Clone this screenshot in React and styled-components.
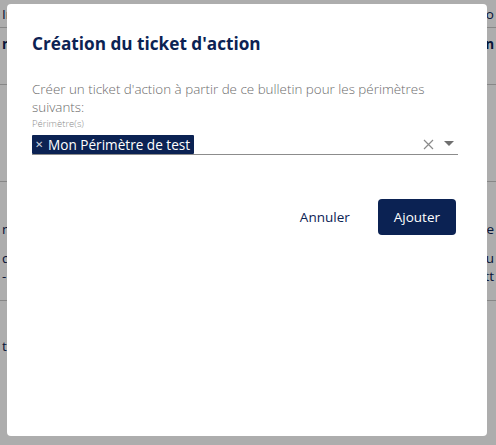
import React from "react";
import styled, { createGlobalStyle } from "styled-components";

const navy = "#0b2253";

const GlobalStyle = createGlobalStyle`
  html, body {
    margin: 0;
    padding: 0;
    background: #fff;
    font-family: "Open Sans", "Noto Sans", sans-serif;
  }
`;

const Page = styled.div`
  width: 496px;
  height: 445px;
  overflow: hidden;
  color: ${navy};
  font-size: 13.5px;
`;

const Row = styled.div`
  height: ${(p) => p.h}px;
  display: flex;
  justify-content: space-between;
  align-items: ${(p) => p.align || "center"};
  padding: ${(p) => p.pt || 0}px 2px 0;
  border-bottom: ${(p) => (p.line ? "1px solid #c8c8c8" : "none")};
  font-weight: ${(p) => (p.bold ? 700 : 400)};
  line-height: 18px;
  box-sizing: border-box;
`;

const Cell = styled.div`
  white-space: nowrap;
`;

const Overlay = styled.div`
  position: fixed;
  inset: 0;
  background: rgba(0, 0, 0, 0.32);
`;

const Dialog = styled.div`
  position: absolute;
  top: 4px;
  left: 7px;
  width: 480px;
  height: 432px;
  box-sizing: border-box;
  background: #fff;
  border-radius: 4px;
  padding: 27px 29px 0 25px;
  display: flex;
  flex-direction: column;
`;

const Title = styled.h2`
  margin: 0;
  font-size: 17.2px;
  line-height: 26px;
  font-weight: 700;
  color: ${navy};
`;

const Intro = styled.p`
  margin: 23px 0 0;
  font-size: 13.4px;
  line-height: 18px;
  font-weight: 300;
  color: #6c6c6c;
`;

const Field = styled.div`
  display: flex;
  flex-direction: column;
`;

const Label = styled.label`
  margin-top: 2px;
  font-size: 9.5px;
  line-height: 12px;
  font-weight: 300;
  color: #8c8c8c;
`;

const Control = styled.div`
  display: flex;
  align-items: center;
  border-bottom: 1px solid #8c8c8c;
  height: 20px;
  margin-top: 4px;
`;

const Chip = styled.span`
  display: inline-flex;
  align-items: center;
  gap: 5px;
  height: 19px;
  padding: 0 4px 0 3px;
  background: ${navy};
  color: #fff;
  font-size: 13.6px;
  border-radius: 1px;
`;

const ChipX = styled.span`
  font-size: 10px;
  color: #c9cfdc;
`;

const Spacer = styled.div`
  flex: 1;
`;

const Indicators = styled.div`
  display: flex;
  align-items: center;
  gap: 10px;
  padding-right: 4px;
  color: #8a8a8a;
`;

const Actions = styled.div`
  display: flex;
  justify-content: flex-end;
  align-items: center;
  gap: 16px;
  margin-top: 44px;
  padding-right: 2px;
`;

const Button = styled.button`
  font-family: inherit;
  font-size: 13.5px;
  height: 36px;
  padding: 0 ${(p) => (p.primary ? 16 : 12)}px;
  border: none;
  border-radius: 4px;
  cursor: pointer;
  background: ${(p) => (p.primary ? navy : "transparent")};
  color: ${(p) => (p.primary ? "#fff" : navy)};
`;

export default function App() {
  return (
    <>
      <GlobalStyle />
      <Page>
        <Row h={28} line>
          <Cell>Info</Cell>
          <Cell>info</Cell>
        </Row>
        <Row h={57} line bold align="flex-start" pt={7}>
          <Cell>n</Cell>
          <Cell>n</Cell>
        </Row>
        <Row h={97} line />
        <Row h={119} line align="flex-start">
          <div style={{ marginTop: 38 }}>
            <Cell>ne</Cell>
            <div style={{ height: 11 }} />
            <Cell>qu</Cell>
            <Cell>-</Cell>
          </div>
          <div style={{ marginTop: 38, textAlign: "right" }}>
            <Cell>de</Cell>
            <div style={{ height: 11 }} />
            <Cell>u</Cell>
            <Cell>tt</Cell>
          </div>
        </Row>
        <Row h={90}>
          <Cell>t</Cell>
          <Cell />
        </Row>
      </Page>
      <Overlay>
        <Dialog>
          <Title>Création du ticket d'action</Title>
          <Intro>
            Créer un ticket d'action à partir de ce bulletin pour les périmètres
            suivants:
          </Intro>
          <Field>
            <Label>Périmètre(s)</Label>
            <Control>
              <Chip>
                <ChipX>✕</ChipX>
                Mon Périmètre de test
              </Chip>
              <Spacer />
              <Indicators>
                <svg width="11" height="11" viewBox="0 0 11 11">
                  <path d="M1 1L10 10M10 1L1 10" stroke="#8a8a8a" strokeWidth="1.2" />
                </svg>
                <svg width="10" height="6" viewBox="0 0 10 6">
                  <path d="M0 0H10L5 5Z" fill="#6f6f6f" />
                </svg>
              </Indicators>
            </Control>
          </Field>
          <Actions>
            <Button>Annuler</Button>
            <Button primary>Ajouter</Button>
          </Actions>
        </Dialog>
      </Overlay>
    </>
  );
}
